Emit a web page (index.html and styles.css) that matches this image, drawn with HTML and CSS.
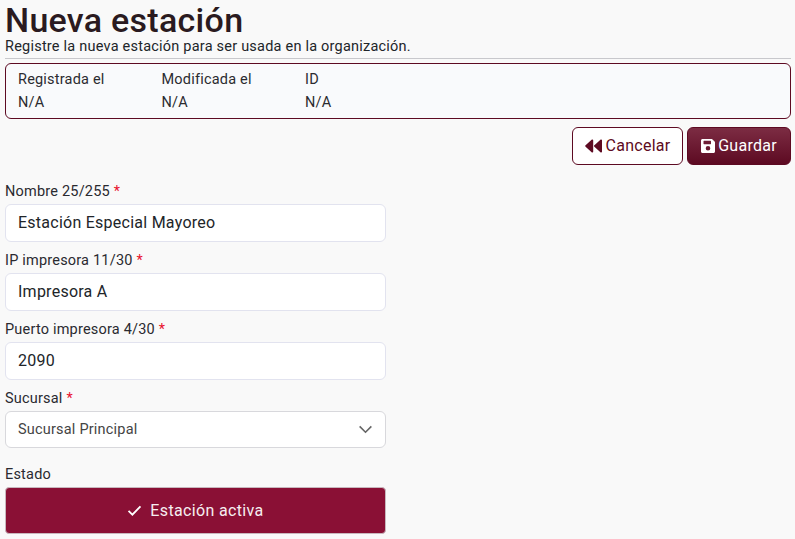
FILE: index.html
```html
<!DOCTYPE html>
<html lang="es">
<head>
<meta charset="utf-8">
<title>Nueva estación</title>
<link rel="stylesheet" href="styles.css">
</head>
<body>
<main class="page">
  <h1 class="title">Nueva estación</h1>
  <p class="subtitle">Registre la nueva estación para ser usada en la organización.</p>
  <hr class="rule">
  <section class="meta">
    <div class="meta-col"><span>Registrada el</span><span>N/A</span></div>
    <div class="meta-col"><span>Modificada el</span><span>N/A</span></div>
    <div class="meta-col"><span>ID</span><span>N/A</span></div>
  </section>
  <div class="actions">
    <button class="btn btn-outline" type="button">
      <svg class="icon-back" viewBox="0 0 18 14" aria-hidden="true"><path d="M8.2 1.2v11.6c0 .7-.8 1-1.3.6L.6 7.7a.9.9 0 0 1 0-1.4L6.9.6c.5-.4 1.3-.1 1.3.6zM17 1.2v11.6c0 .7-.8 1-1.3.6L9.4 7.7a.9.9 0 0 1 0-1.4L15.700.6c.5-.4 1.300-.1 1.300.6z"/></svg>
      <span>Cancelar</span>
    </button>
    <button class="btn btn-solid" type="button">
      <svg class="icon-save" viewBox="0 0 14 14" aria-hidden="true"><path fill-rule="evenodd" d="M1.500 0h8.900c.4 0 .8.200 1.100.4l2.100 2.100c.3.300.4.700.4 1.100v8.900c0 .8-.7 1.500-1.500 1.500h-11C.7 14 0 13.300 0 12.500v-11C0 .7.700 0 1.500 0zM3 1.800c-.3 0-.5.200-.5.500v2.400c0 .3.200.5.500.500h6.500c.3 0 .5-.2.500-.5V2.300c0-.3-.2-.5-.5-.5zM7 7a2.300 2.300 0 1 0 0 4.600A2.300 2.300 0 0 0 7 7z"/></svg>
      <span>Guardar</span>
    </button>
  </div>
  <form class="form">
    <div class="field">
      <label class="label">Nombre 25/255 <em class="req">*</em></label>
      <div class="input">Estación Especial Mayoreo</div>
    </div>
    <div class="field">
      <label class="label">IP impresora 11/30 <em class="req">*</em></label>
      <div class="input">Impresora A</div>
    </div>
    <div class="field">
      <label class="label">Puerto impresora 4/30 <em class="req">*</em></label>
      <div class="input">2090</div>
    </div>
    <div class="field">
      <label class="label">Sucursal <em class="req">*</em></label>
      <div class="select">
        <span>Sucursal Principal</span>
        <svg class="chevron" viewBox="0 0 16 10" aria-hidden="true"><path d="M1.500 1.500 8 8l6.500-6.500"/></svg>
      </div>
    </div>
    <div class="field field-state">
      <label class="label">Estado</label>
      <button class="state" type="button">
        <svg class="check" viewBox="0 0 16 12" aria-hidden="true"><path d="M1.500 6.500 5.700 10.500 14.500 1.500"/></svg>
        <span>Estación activa</span>
      </button>
    </div>
  </form>
</main>
</body>
</html>
```
FILE: styles.css
```css
* { box-sizing: border-box; }
html, body { margin: 0; height: 100%; overflow: hidden; }
body {
  background: #f9f9f9;
  color: #212529;
  font-family: "Roboto", "Inter", sans-serif;
  font-size: 14.5px;
}
.page { padding: 3px 4px 0 5px; }
.title {
  margin: 0;
  font-size: 34px;
  line-height: 35px;
  font-weight: 500;
  color: #2a1a20;
  letter-spacing: 0.28px;
}
.subtitle { margin: 0; font-size: 14.5px; line-height: 17px; letter-spacing: 0.22px; }
.rule { margin: 3px 0 0; border: 0; border-top: 1px solid #c8c8cc; }
.meta {
  margin-top: 4px;
  height: 56px;
  border: 1px solid #5d0a22;
  border-radius: 6px;
  background: #f9fafc;
  padding: 7px 12px;
  display: flex;
  color: #2b2b30;
}
.meta-col {
  width: 143.500px;
  display: flex;
  flex-direction: column;
  gap: 5px;
  line-height: 18px;
  letter-spacing: 0.2px;
}
.actions { display: flex; justify-content: flex-end; gap: 4px; margin-top: 8px; }
.btn {
  height: 38px;
  border-radius: 6px;
  font: inherit;
  font-size: 16px;
  display: flex;
  align-items: center;
  justify-content: center;
  gap: 3px;
  padding: 0 0 2px;
  letter-spacing: 0.25px;
}
.btn svg { margin-top: 2px; }
.btn-outline { width: 111px; background: #fff; border: 1px solid #5d0a22; color: #5d0a22; }
.btn-solid {
  width: 104px;
  background: linear-gradient(180deg, #7c2c43 0%, #5d0a22 100%);
  border: 1px solid #5d0a22;
  color: #fff;
}
.icon-back { width: 18px; height: 14px; fill: #5d0a22; }
.icon-save { width: 14px; height: 14px; fill: #fff; }
.form { display: flex; flex-direction: column; width: 381px; margin-top: 17px; }
.field { display: flex; flex-direction: column; margin-bottom: 9px; }
.field-state { margin-top: 8px; }
.label { font-size: 14.5px; line-height: 20px; margin-bottom: 2px; letter-spacing: 0.2px; color: #2a2a30; }
.req { color: #e8112d; font-style: normal; }
.input {
  height: 38px;
  background: #fff;
  border: 1px solid #e2e3ef;
  border-radius: 6px;
  padding: 0 12px;
  font-size: 16px;
  line-height: 35px;
  color: #212529;
  letter-spacing: 0.25px;
}
.select {
  height: 37px;
  background: #fff;
  border: 1px solid #d8d8dc;
  border-radius: 6px;
  padding: 0 12px;
  display: flex;
  align-items: center;
  justify-content: space-between;
  color: #444;
  letter-spacing: 0.2px;
}
.chevron { width: 15px; height: 9px; fill: none; stroke: #666; stroke-width: 1.800; }
.state {
  height: 47px;
  background: #8a1035;
  border: 1px solid #c8b8be;
  border-radius: 4px;
  color: #f6eef0;
  font: inherit;
  font-size: 16px;
  letter-spacing: 0.35px;
  display: flex;
  align-items: center;
  justify-content: center;
  gap: 8px;
  padding: 0;
}
.check { width: 15px; height: 11px; fill: none; stroke: #fff; stroke-width: 2; }
```
